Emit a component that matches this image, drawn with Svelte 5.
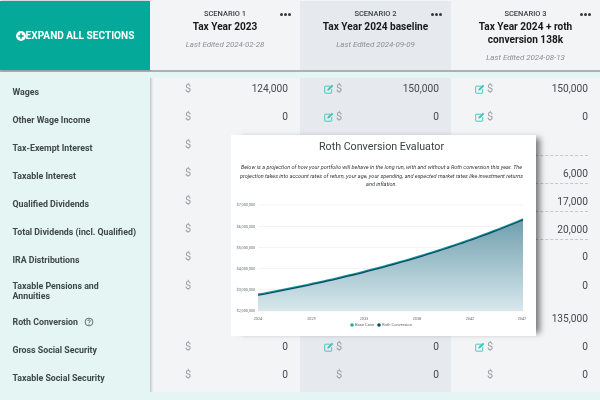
<script lang="ts">
	const scenarios = [
		{ label: 'SCENARIO 1', name: 'Tax Year 2023', edited: '2024-02-28' },
		{ label: 'SCENARIO 2', name: 'Tax Year 2024 baseline', edited: '2024-09-09' },
		{ label: 'SCENARIO 3', name: 'Tax Year 2024 + roth conversion 138k', edited: '2024-08-13' },
	];

	// v = one value per scenario, null leaves the cell empty
	// covered = the modal sits over the inputs of scenarios 2 and 3 on this row
	const rows = [
		{ name: 'Wages', v: ['124,000', '150,000', '150,000'], edit: true },
		{ name: 'Other Wage Income', v: ['0', '0', '0'], edit: true },
		{ name: 'Tax-Exempt Interest', v: ['', null, ''], covered: true, dashed: true },
		{ name: 'Taxable Interest', v: ['', null, '6,000'], covered: true, dashed: true },
		{ name: 'Qualified Dividends', v: ['', null, '17,000'], covered: true, dashed: true },
		{ name: 'Total Dividends (incl. Qualified)', v: ['', null, '20,000'], covered: true, dashed: true },
		{ name: 'IRA Distributions', v: ['', null, '0'], covered: true },
		{ name: 'Taxable Pensions and Annuities', v: ['', null, '0'], covered: true, tall: true },
		{ name: 'Roth Conversion', v: [null, null, '135,000'], covered: true, help: true },
		{ name: 'Gross Social Security', v: ['0', '0', '0'], edit: true },
		{ name: 'Taxable Social Security', v: ['0', '0', '0'], edit: false },
	];

	const gridLines = [
		{ y: 5, label: '$7,000,000' },
		{ y: 26.5, label: '$6,000,000' },
		{ y: 47.5, label: '$5,000,000' },
		{ y: 68.5, label: '$4,000,000' },
		{ y: 89.5, label: '$3,000,000' },
		{ y: 111, label: '$2,000,000' },
	];
	const years = [
		{ x: 27, label: '2024' },
		{ x: 80.5, label: '2029' },
		{ x: 133, label: '2033' },
		{ x: 186, label: '2038' },
		{ x: 239, label: '2042' },
		{ x: 291, label: '2047' },
	];

	// portfolio in $M, compounding from 2.76 to 6.31 across the plot
	const curve = Array.from({ length: 54 }, (_, i) => {
		const t = i / 53;
		const value = 2.76 * Math.pow(6.31 / 2.76, t);
		const x = 27 + 265 * t;
		const y = 111 - (value - 2) * 21.2;
		return `${i === 0 ? 'M' : 'L'}${x.toFixed(1)} ${y.toFixed(1)}`;
	}).join(' ');
</script>

<div class="page">
	<div class="head">
		<button class="expand">
			<svg width="10" height="10" viewBox="0 0 11 11">
				<circle cx="5.5" cy="5.5" r="5.4" fill="#fff" />
				<path d="M5.5 2.4v6.2M2.4 5.5h6.2" stroke="#04a99a" stroke-width="1.8" />
			</svg>
			<span>EXPAND ALL SECTIONS</span>
		</button>
		{#each scenarios as s, i}
			<div class="scenario" class:mid={i === 1}>
				<div class="label">{s.label}</div>
				<span class="dots"><i></i><i></i><i></i></span>
				<div class="name">{s.name}</div>
				<div class="edited">Last Edited {s.edited}</div>
			</div>
		{/each}
	</div>

	<div class="body">
		{#each rows as row}
			<div class="row" class:tall={row.tall}>
				<div class="name-cell">
					<span>{row.name}</span>
					{#if row.help}
						<svg class="help" width="10" height="10" viewBox="0 0 10 10">
							<circle cx="5" cy="5" r="3.9" fill="none" stroke="#46514f" stroke-width=".8" />
							<path d="M3.7 4c.1-.8.7-1.2 1.4-1.2.8 0 1.3.5 1.3 1.1 0 1-1.4 1-1.4 2.1" fill="none" stroke="#46514f" stroke-width=".8" />
							<circle cx="5" cy="7.2" r=".5" fill="#46514f" />
						</svg>
					{/if}
				</div>
				{#each row.v as val, i}
					<div class="cell" class:mid={i === 1} class:first={i === 0}>
						{#if val !== null}
							<div class="input" class:dashed={row.dashed && i === 2}>
								<div class="slot" class:first={i === 0}>
									{#if i > 0 && row.edit}
										<svg class="edit" width="10" height="10" viewBox="0 0 10 10" fill="none" stroke="#3cc4b4" stroke-width=".9">
											<path d="M6.5 2.2H1.2a.5.5 0 0 0-.5.5v6a.5.5 0 0 0 .5.5h6a.5.5 0 0 0 .5-.5V5" />
											<path d="M3.6 6.3l.4-1.6L8 .9l1.1 1.1-4 3.9z" fill="#3cc4b4" stroke-width=".5" />
										</svg>
									{/if}
								</div>
								{#if !(row.covered && i > 0)}
									<span class="dollar">$</span>
								{/if}
								<span class="val">{val}</span>
							</div>
						{/if}
					</div>
				{/each}
			</div>
		{/each}
	</div>

	<div class="modal">
		<h2>Roth Conversion Evaluator</h2>
		<p>Below is a projection of how your portfolio will behave in the long run, with and without a Roth conversion this year. The projection takes into account rates of return, your age, your spending, and expected market rates like investment returns and inflation.</p>
		<svg class="chart" width="305" height="136" viewBox="0 0 305 136">
			<defs>
				<linearGradient id="fill" x1="0" y1="0" x2="0" y2="1">
					<stop offset="0" stop-color="#6f9fae" />
					<stop offset="1" stop-color="#d8e8ec" />
				</linearGradient>
			</defs>
			{#each gridLines as g}
				<line x1="27" x2="292" y1={g.y} y2={g.y} stroke="#eef0f1" stroke-width=".7" />
				<text x="5.5" y={g.y + 1.3} class="tick">{g.label}</text>
			{/each}
			<path d="{curve} V111 H27 Z" fill="url(#fill)" />
			<path d={curve} fill="none" stroke="#14a092" stroke-width="1.4" transform="translate(0 -.6)" />
			<path d={curve} fill="none" stroke="#0b4a6b" stroke-width="1.3" transform="translate(0 .3)" />
			{#each years as y}
				<text x={y.x} y="120" class="tick" text-anchor="middle">{y.label}</text>
			{/each}
			<circle cx="121" cy="125" r="1.8" fill="#1fae9f" />
			<text x="124" y="126.4" class="legend">Base Case</text>
			<circle cx="148" cy="125" r="1.8" fill="#0b4a6b" />
			<text x="151" y="126.4" class="legend">Roth Conversion</text>
		</svg>
	</div>
</div>

<style>
	:global(body) {
		background: #e4f5f3;
	}

	.page {
		position: relative;
		width: 600px;
		height: 400px;
		overflow: hidden;
		background: #e4f5f3;
		font-family: Roboto, "Liberation Sans", sans-serif;
		filter: blur(0.35px);
	}

	.head {
		display: grid;
		grid-template-columns: 150px 150px 151px 149px;
		height: 72px;
		padding-top: 1px;
		box-sizing: border-box;
		background: #f3f4f6;
		border-bottom: 2px solid #a9b3b1;
	}

	.expand {
		position: relative;
		display: flex;
		align-items: center;
		justify-content: center;
		border: 0;
		padding: 0;
		background: #04a99a;
		box-shadow: 1px 0 2px rgba(0, 0, 0, 0.35);
		color: #fff;
		font: 700 10.1px Roboto, sans-serif;
	}

	.scenario {
		position: relative;
		display: flex;
		flex-direction: column;
		align-items: center;
		padding: 7.5px 14px 0 14px;
		text-align: center;
		background: #f3f4f6;
	}

	.mid {
		background: #e6eaee;
	}

	.label {
		font-size: 7.5px;
		font-weight: 500;
		line-height: 10px;
		color: #3b4245;
	}

	.name {
		margin-top: 2.5px;
		font-size: 10.1px;
		font-weight: 700;
		line-height: 12.5px;
		color: #17191b;
	}

	.edited {
		margin-top: 6.5px;
		font-size: 7.9px;
		font-style: italic;
		line-height: 10px;
		color: #8a8e93;
	}

	.dots {
		position: absolute;
		top: 11.5px;
		right: 9px;
		display: flex;
		gap: 1px;
	}

	.dots i {
		width: 3px;
		height: 3px;
		border-radius: 50%;
		background: #33393c;
	}

	.body {
		margin-top: 6px;
	}

	.row {
		display: grid;
		grid-template-columns: 150px 150px 151px 149px;
		height: 28px;
	}

	.row.tall {
		height: 34px;
	}

	.name-cell {
		display: flex;
		align-items: center;
		gap: 6px;
		padding-left: 12.5px;
		background: #e4f5f3;
		font-size: 8.8px;
		font-weight: 700;
		line-height: 10px;
		color: #3e4848;
	}

	.name-cell span {
		max-width: 125px;
	}

	.cell {
		background: #f3f4f6;
		padding-right: 12px;
	}

	.cell.first {
		background: linear-gradient(90deg, #bcc1c1, #e6e8ea 2px, #f3f4f6 4px);
	}

	.cell.mid {
		background: #e6eaee;
	}

	.input {
		display: flex;
		align-items: center;
		box-sizing: border-box;
		height: 21px;
		color: #44494d;
	}

	.tall .input {
		height: 23px;
	}

	.input.dashed {
		height: 22px;
		padding-top: 2px;
		border-bottom: 1px dashed #c4c8ca;
	}

	.slot {
		display: flex;
		justify-content: flex-end;
		flex: none;
		width: 36px;
		padding-right: 2px;
		box-sizing: border-box;
	}

	.slot.first {
		width: 35px;
	}

	.edit {
		margin-top: 1px;
	}

	.dollar {
		font-size: 11px;
		color: #9a9ea1;
	}

	.val {
		margin-left: auto;
		font-size: 10.2px;
	}

	.modal {
		position: absolute;
		left: 231px;
		top: 135px;
		width: 305px;
		height: 201px;
		background: #fff;
		box-shadow: 7px 0 6px -3px rgba(0, 0, 0, 0.5);
	}

	.modal h2 {
		margin: 4px 0 0;
		padding-right: 4px;
		font-size: 10.7px;
		font-weight: 400;
		line-height: 16px;
		text-align: center;
		color: #3c4144;
	}

	.modal p {
		margin: 8px 8px 0 4px;
		font-size: 5.5px;
		font-style: italic;
		line-height: 8.5px;
		text-align: center;
		color: #33383b;
	}

	.chart {
		position: absolute;
		left: 0;
		top: 65px;
		display: block;
	}

	.tick {
		font-size: 3.8px;
		fill: #666c70;
	}

	.legend {
		font-size: 4.1px;
		fill: #666c70;
	}
</style>
